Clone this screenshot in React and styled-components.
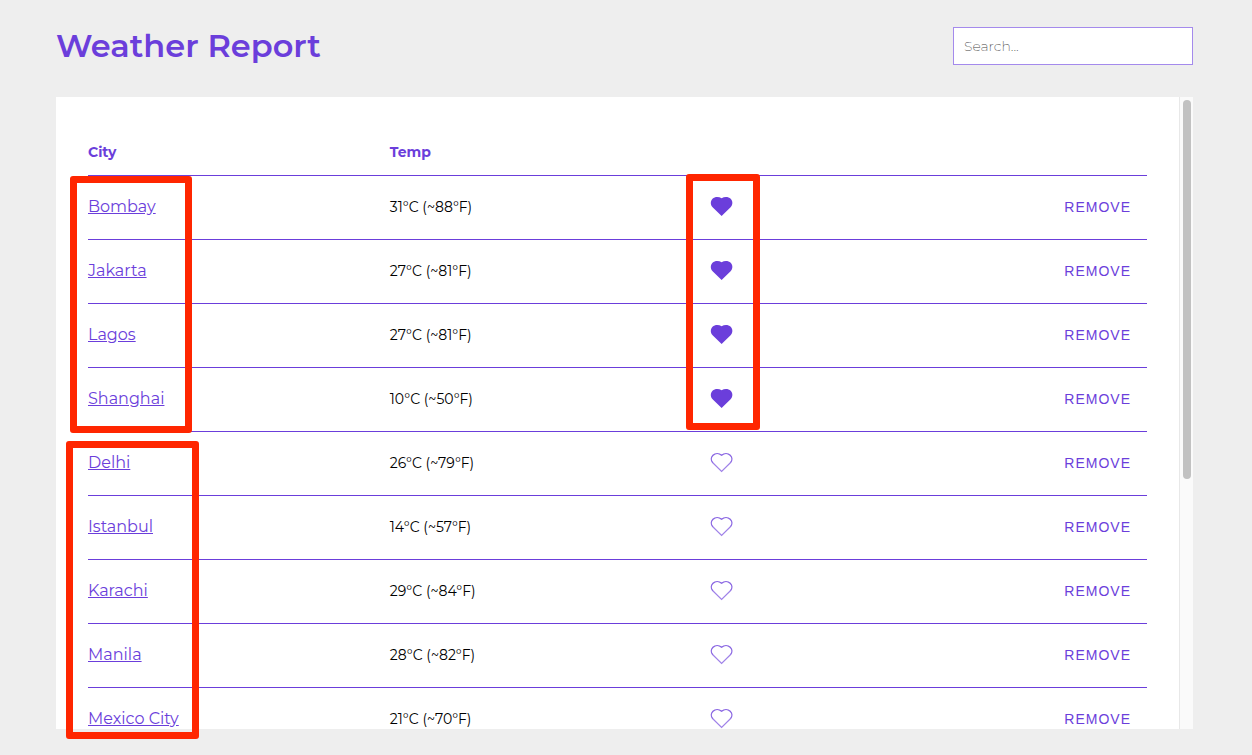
import React, { useState } from "react";
import styled, { createGlobalStyle } from "styled-components";

const purple = "#6b3edb";
const sans = `Montserrat, Inter, "Open Sans", sans-serif`;

const GlobalStyle = createGlobalStyle`
  *, *::before, *::after { box-sizing: border-box; }
  body {
    margin: 0;
    background: #eeeeee;
    font-family: ${sans};
    color: #000000;
  }
`;

const Page = styled.main`
  position: relative;
  display: flex;
  flex-direction: column;
  height: 100vh;
  padding: 27px 59px 26px 56px;
`;

const Header = styled.header`
  display: flex;
  justify-content: space-between;
  align-items: center;
  height: 38px;
  margin-bottom: 32px;
`;

const Title = styled.h1`
  margin: 0;
  font-size: 32px;
  line-height: 38px;
  font-weight: 600;
  color: ${purple};
`;

const Search = styled.input`
  width: 240px;
  height: 38px;
  padding: 0 10px;
  border: 1px solid #a48aec;
  border-radius: 0;
  background: #ffffff;
  font-family: ${sans};
  font-size: 14px;
  font-weight: 200;
  outline: none;
  &::placeholder { color: #444444; opacity: 1; }
`;

const Panel = styled.section`
  display: flex;
  flex: 1;
  min-height: 0;
  background: #ffffff;
`;

const Scroller = styled.div`
  flex: 1;
  min-width: 0;
  padding: 32px 32px 0;
  overflow-y: auto;
  scrollbar-width: none;
`;

const Track = styled.div`
  width: 14px;
  padding: 3px 2px 3px 3px;
  border-left: 1px solid #e8e8e8;
  background: #fafafa;
`;

const Thumb = styled.div`
  width: 8px;
  height: 60.5%;
  border-radius: 4px;
  background: #c1c1c1;
`;

const Table = styled.table`
  width: 100%;
  table-layout: fixed;
  border-collapse: separate;
  border-spacing: 0;
`;

const HeadCell = styled.th`
  width: ${(p) => p.$width};
  height: 47px;
  padding: 0;
  border-bottom: 1px solid ${purple};
  text-align: left;
  font-size: 14px;
  line-height: 20px;
  font-weight: 700;
  color: ${purple};
`;

const Cell = styled.td`
  height: 64px;
  padding: 0 0 2px;
  border-bottom: 1px solid ${purple};
  text-align: ${(p) => p.$align || "left"};
  font-size: 14px;
  line-height: 20px;
`;

const CityLink = styled.a`
  font-size: 16px;
  color: ${purple};
  text-decoration: underline;
`;

const HeartButton = styled.button`
  display: block;
  width: 24px;
  height: 24px;
  margin-left: 18px;
  padding: 0;
  border: 0;
  background: none;
  cursor: pointer;
  svg { display: block; }
`;

const RemoveButton = styled.button`
  padding: 0 16px;
  border: 0;
  background: none;
  color: ${purple};
  font-family: "Liberation Sans", Arial, sans-serif;
  font-size: 14px;
  line-height: 20px;
  letter-spacing: 1px;
  text-transform: uppercase;
  cursor: pointer;
`;

const Marker = styled.div`
  position: absolute;
  left: ${(p) => p.$x}px;
  top: ${(p) => p.$y}px;
  width: ${(p) => p.$w}px;
  height: ${(p) => p.$h}px;
  border: 7px solid #ff2600;
  border-radius: 3px;
  pointer-events: none;
`;

const cities = [
  { name: "Bombay", temp: "31°C (~88°F)", liked: true },
  { name: "Jakarta", temp: "27°C (~81°F)", liked: true },
  { name: "Lagos", temp: "27°C (~81°F)", liked: true },
  { name: "Shanghai", temp: "10°C (~50°F)", liked: true },
  { name: "Delhi", temp: "26°C (~79°F)", liked: false },
  { name: "Istanbul", temp: "14°C (~57°F)", liked: false },
  { name: "Karachi", temp: "29°C (~84°F)", liked: false },
  { name: "Manila", temp: "28°C (~82°F)", liked: false },
  { name: "Mexico City", temp: "21°C (~70°F)", liked: false },
];

function Heart({ filled }) {
  return (
    <svg width="24" height="24" viewBox="0 0 24 24" aria-hidden="true">
      {filled ? (
        <path
          fill={purple}
          d="M11.6 21 L2.6 12.2 C0.2 9.7 0.3 5.9 2.5 3.7 C4.8 1.5 8.8 1.4 11.6 3.2 C14.4 1.4 18.4 1.5 20.7 3.7 C22.9 5.9 23 9.7 20.6 12.2 Z"
        />
      ) : (
        <g fill="none" stroke={purple}>
          <path
            strokeWidth="1.4"
            strokeOpacity="0.8"
            d="M2.8 11.8 C0.8 9.5 0.9 6.2 3 4.2 C5.3 2.1 9 2.1 11.6 4.2 C14.2 2.1 17.9 2.1 20.2 4.2 C22.3 6.2 22.4 9.5 20.4 11.8"
          />
          <path strokeWidth="1.2" strokeOpacity="0.65" d="M2.8 11.8 L11.6 20.4 L20.4 11.8" />
        </g>
      )}
    </svg>
  );
}

export default function App() {
  const [rows, setRows] = useState(cities);
  const [query, setQuery] = useState("");

  const shown = rows.filter((r) => r.name.toLowerCase().includes(query.toLowerCase()));
  const toggle = (name) =>
    setRows(rows.map((r) => (r.name === name ? { ...r, liked: !r.liked } : r)));
  const remove = (name) => setRows(rows.filter((r) => r.name !== name));

  return (
    <>
      <GlobalStyle />
      <Page>
        <Header>
          <Title>Weather Report</Title>
          <Search
            type="text"
            aria-label="Search"
            placeholder="Search..."
            value={query}
            onChange={(e) => setQuery(e.target.value)}
          />
        </Header>
        <Panel>
          <Scroller>
            <Table>
              <thead>
                <tr>
                  <HeadCell scope="col" $width="28.5%">City</HeadCell>
                  <HeadCell scope="col" $width="28.5%">Temp</HeadCell>
                  <HeadCell $width="21.5%" />
                  <HeadCell $width="21.5%" />
                </tr>
              </thead>
              <tbody>
                {shown.map((r) => (
                  <tr key={r.name}>
                    <Cell><CityLink href="#">{r.name}</CityLink></Cell>
                    <Cell>{r.temp}</Cell>
                    <Cell>
                      <HeartButton
                        type="button"
                        aria-label="Favourite"
                        aria-pressed={r.liked}
                        onClick={() => toggle(r.name)}
                      >
                        <Heart filled={r.liked} />
                      </HeartButton>
                    </Cell>
                    <Cell $align="right">
                      <RemoveButton type="button" onClick={() => remove(r.name)}>
                        Remove
                      </RemoveButton>
                    </Cell>
                  </tr>
                ))}
              </tbody>
            </Table>
          </Scroller>
          <Track><Thumb /></Track>
        </Panel>
        <Marker $x={70} $y={176} $w={122} $h={257} />
        <Marker $x={66} $y={441} $w={133} $h={298} />
        <Marker $x={686} $y={174} $w={74} $h={256} />
      </Page>
    </>
  );
}
